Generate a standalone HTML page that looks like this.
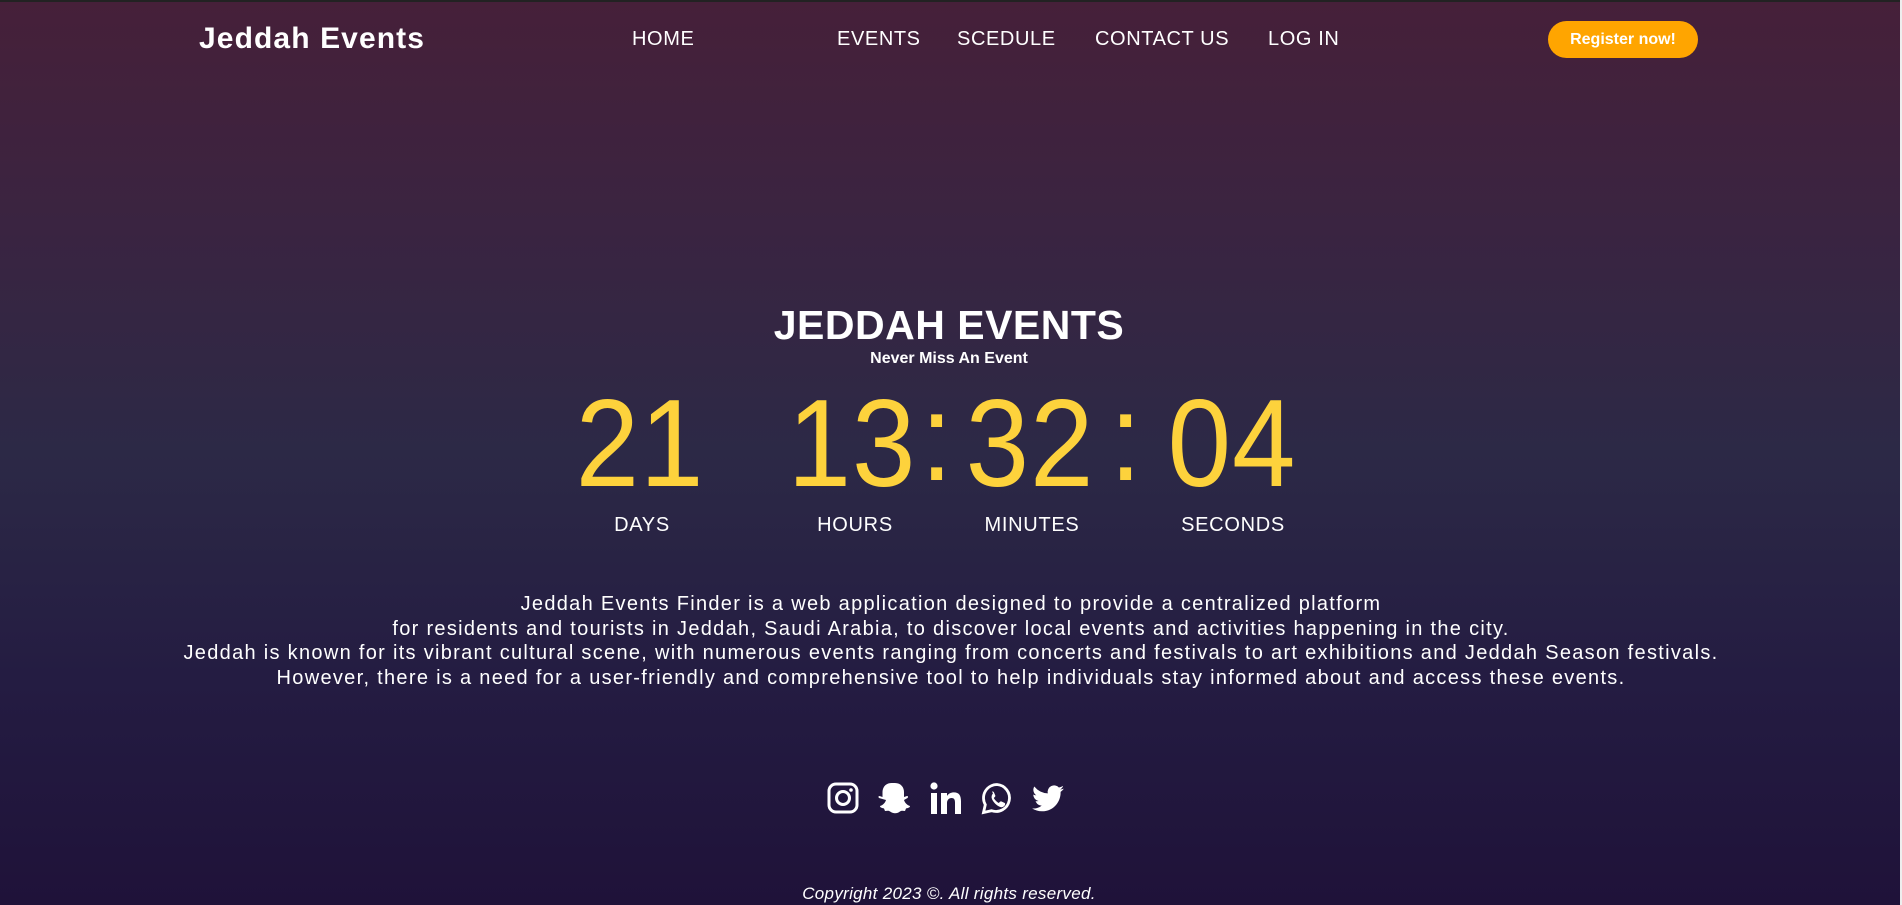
<!DOCTYPE html>
<html><head><meta charset="utf-8"><style>
*{margin:0;padding:0;box-sizing:border-box}
html,body{width:1902px;height:905px;overflow:hidden}
body{position:relative;font-family:"Liberation Sans",sans-serif;color:#fff;
background:linear-gradient(180deg,#462039 0%,#3a2441 25%,#2c2946 50%,#241c42 75%,#1f1239 100%);}
.a{position:absolute;white-space:nowrap}
.c{transform:translateX(-50%)}
.nav{font-size:20px;top:28px;letter-spacing:.6px}
.d{font-size:124px;color:#fdd23c;top:382px;line-height:1;transform:translateX(-50%) scaleX(.92);letter-spacing:1px}
.l{font-size:20px;top:514px;letter-spacing:.7px}
.p{font-size:20px;letter-spacing:1.3px;left:951px;transform:translateX(-50%)}
</style></head><body>
<div class="a" style="top:0;left:0;width:1902px;height:2px;background:#222"></div>
<div class="a" style="top:0;right:0;width:2px;height:905px;background:#eee"></div>
<div class="a" style="left:199px;top:22px;font-size:30px;font-weight:bold;letter-spacing:1.1px">Jeddah Events</div>
<div class="a nav" style="left:632px">HOME</div>
<div class="a nav" style="left:837px">EVENTS</div>
<div class="a nav" style="left:957px">SCEDULE</div>
<div class="a nav" style="left:1095px">CONTACT US</div>
<div class="a nav" style="left:1268px">LOG IN</div>
<div class="a" style="left:1548px;top:21px;width:150px;height:37px;border-radius:19px;background:#ffa500;font-weight:bold;font-size:16px;line-height:37px;text-align:center">Register now!</div>
<div class="a c" style="left:949px;top:302px;font-size:41px;font-weight:bold;letter-spacing:.5px">JEDDAH EVENTS</div>
<div class="a c" style="left:949px;top:350px;font-size:16px;font-weight:bold">Never Miss An Event</div>
<div class="a d" style="left:640px">21</div>
<div class="a d" style="left:852px">13</div>
<div class="a d" style="left:937px;top:376px">:</div>
<div class="a d" style="left:1030px">32</div>
<div class="a d" style="left:1126px;top:376px">:</div>
<div class="a d" style="left:1232px">04</div>
<div class="a l c" style="left:642px">DAYS</div>
<div class="a l c" style="left:855px">HOURS</div>
<div class="a l c" style="left:1032px">MINUTES</div>
<div class="a l c" style="left:1233px">SECONDS</div>
<div class="a p" style="top:593px">Jeddah Events Finder is a web application designed to provide a centralized platform</div>
<div class="a p" style="top:618px">for residents and tourists in Jeddah, Saudi Arabia, to discover local events and activities happening in the city.</div>
<div class="a p" style="top:642px">Jeddah is known for its vibrant cultural scene, with numerous events ranging from concerts and festivals to art exhibitions and Jeddah Season festivals.</div>
<div class="a p" style="top:667px">However, there is a need for a user-friendly and comprehensive tool to help individuals stay informed about and access these events.</div>
<svg class="a" style="left:826px;top:780px" width="250" height="36" viewBox="0 0 250 36" fill="#fff">
 <g transform="translate(1,2)"><rect x="2" y="2" width="28" height="28" rx="7" fill="none" stroke="#fff" stroke-width="3"/><circle cx="16" cy="16" r="6.5" fill="none" stroke="#fff" stroke-width="3"/><circle cx="24" cy="8" r="1.8"/></g>
 <path transform="translate(52,2)" d="M17 1c6 0 9 4.5 9 9v5l3-1c1 0 1.5 1 .5 2l-3.5 2c1 3 3 5 6 6 0 1.5-2 2-4 2.5l-1 2.5-3-.3c-2 0-3 2.5-7 2.5s-5-2.5-7-2.5l-3 .3-1-2.5c-2-.5-4-1-4-2.5 3-1 5-3 6-6L1 16c-1-1-.5-2 .5-2l3 1v-5c0-4.5 3-9 9-9z" />
 <g transform="translate(104,2)"><rect x="1" y="11" width="6" height="21"/><circle cx="4" cy="4" r="3.6"/><path d="M11 11h6v3c1.5-2.5 4-3.6 7-3.6 5 0 7 3 7 9V32h-6V20.5c0-3-1-4.5-3.5-4.5S17 18 17 21v11h-6z"/></g>
 <g transform="translate(155,2)"><path d="M16 2.5A13.5 13.5 0 0 0 4.3 22.7L2.5 30.5l8-1.8A13.5 13.5 0 1 0 16 2.5z" fill="none" stroke="#fff" stroke-width="2.8"/><path d="M11 9.5c1 0 1.5 0 2 1l1.3 3c.2.6 0 1-.5 1.5l-1 1c1 2 3 4 5 5l1.2-1.2c.5-.5 1-.5 1.5-.3l3 1.4c.7.3.8 1 .5 2-.7 1.6-2.4 2.6-4.3 2.2-3.5-.8-8-5.2-9-9-.4-2 .5-4 1.3-4.6z"/></g>
 <path transform="translate(206,3)" d="M32 5.5c-1.2.5-2.4.9-3.8 1 1.4-.8 2.4-2.1 2.9-3.600-1.300.8-2.700 1.300-4.200 1.600A6.500 6.500 0 0 0 15.800 10.400 18.600 18.600 0 0 1 2.300 3.500a6.500 6.500 0 0 0 2 8.800c-1 0-2-.3-3-.8 0 3.200 2.300 5.900 5.300 6.500-1 .3-2 .3-3 .1.9 2.600 3.300 4.500 6.100 4.500A13 13 0 0 1 0 25.400 18.500 18.500 0 0 0 10 28.300c12 0 18.600-10 18.600-18.600v-.8c1.300-1 2.400-2.100 3.300-3.400z"/>
</svg>
<div class="a c" style="left:949px;top:884px;font-size:17px;font-style:italic;letter-spacing:.3px">Copyright 2023 ©. All rights reserved.</div>
</body></html>
